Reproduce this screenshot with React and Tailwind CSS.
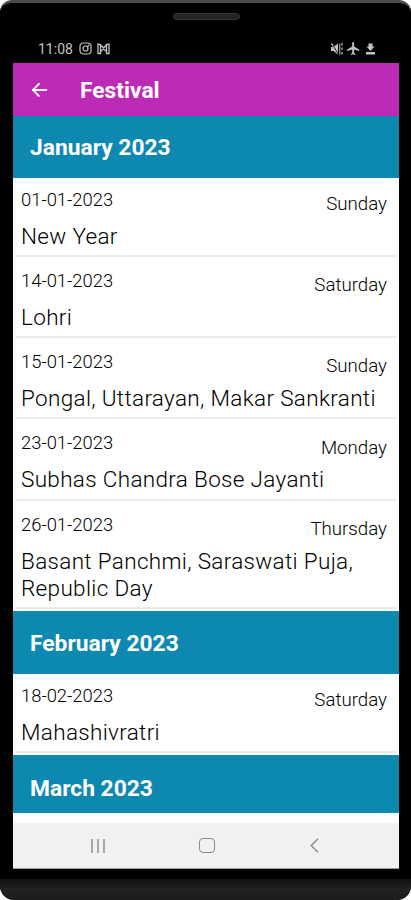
const months = [
  {
    title: 'January 2023',
    height: 'h-[61.5px]',
    festivals: [
      { date: '01-01-2023', day: 'Sunday', names: ['New Year'] },
      { date: '14-01-2023', day: 'Saturday', names: ['Lohri'] },
      { date: '15-01-2023', day: 'Sunday', names: ['Pongal, Uttarayan, Makar Sankranti'] },
      { date: '23-01-2023', day: 'Monday', names: ['Subhas Chandra Bose Jayanti'] },
      { date: '26-01-2023', day: 'Thursday', names: ['Basant Panchmi, Saraswati Puja,', 'Republic Day'] },
    ],
  },
  {
    title: 'February 2023',
    height: 'h-[63px] pt-[4px]',
    festivals: [{ date: '18-02-2023', day: 'Saturday', names: ['Mahashivratri'] }],
  },
  { title: 'March 2023', height: 'h-[63px] pt-[5px]', festivals: [] },
]

function StatusBar() {
  return (
    <div className="h-[33px] shrink-0 flex items-center justify-between pl-[25px] pr-[23px] pt-[4px] text-[#c4c4c4]">
      <div className="flex items-center">
        <span className="w-[35px] text-[14px] leading-none">11:08</span>
        <svg className="ml-[6px]" width="13" height="13" viewBox="0 0 13 13" fill="none" stroke="currentColor" strokeWidth="1.2">
          <rect x="1" y="1" width="11" height="11" rx="3.2" />
          <circle cx="6.5" cy="6.5" r="2.5" />
          <circle cx="9.5" cy="3.5" r=".4" />
        </svg>
        <svg className="ml-[5px]" width="13" height="12" viewBox="0 0 13 12" fill="none" stroke="currentColor" strokeWidth="1.3">
          <path d="M1 1v9.5h2.5V1.5ZM9.5 1.5v9H12V1ZM3.5 2 6.5 5l3-3M3.5 8.500l3-2.500 3 2.500" />
        </svg>
      </div>
      <div className="flex items-center gap-[4px]">
        <svg width="12" height="12" viewBox="0 0 12 12" fill="currentColor">
          <path d="M0 4h2.5L7 .5v11L2.500 8H0Z" />
          <path d="M.5.5l7 10.5" stroke="#000" strokeWidth=".9" />
          <path d="M0 0l2.5 3.5" stroke="currentColor" strokeWidth="1.2" />
          <path d="M8.8.5v11" stroke="currentColor" strokeWidth="1" />
          <path d="M11 0v2.5M11 4.5V7M11 9v2.5" stroke="currentColor" strokeWidth="1.2" />
        </svg>
        <svg width="13" height="13" viewBox="2 2 20 20" fill="currentColor">
          <path d="M21 16v-2l-8-5V3.500a1.500 1.500 0 0 0-3 0V9l-8 5v2l8-2.500V19l-2 1.500V22l3.500-1 3.500 1v-1.500L13 19v-5.500l8 2.500z" />
        </svg>
        <svg className="ml-[1px]" width="11" height="12" viewBox="0 0 11 12" fill="currentColor">
          <path d="M3.5.5h4v3h2L5.5 8l-4-4.500h2Z" />
          <path d="M1 9h9v2.5H1Z" />
        </svg>
      </div>
    </div>
  )
}

function FestivalRow({ festival }) {
  return (
    <div className="px-[2px] pb-[2px] shrink-0">
      <div className="flex flex-col border-x border-x-[#f2f2f2] border-b-2 border-b-[#ebebeb] pl-[5px] pr-[9px] pt-[11px] pb-[5.25px] font-light text-black">
        <div className="flex items-start justify-between leading-[22px]">
          <span className="text-[18.4px]">{festival.date}</span>
          <span className="pt-[4.25px] text-[18.7px]">{festival.day}</span>
        </div>
        <div className="mt-[7.75px] text-[22.5px] leading-[27px] tracking-[0.33px] whitespace-nowrap">
          {festival.names.map((name) => (
            <div key={name}>{name}</div>
          ))}
        </div>
      </div>
    </div>
  )
}

function NavBar() {
  return (
    <div className="h-[46px] shrink-0 flex items-center justify-between bg-[#f1f1f1] border-b border-[#999] pl-[78px] pr-[80px] text-[#8b8b8b]">
      <div className="flex gap-[4px]">
        <span className="w-[2px] h-[14px] bg-[#a8a8a8]" />
        <span className="w-[2px] h-[14px] bg-[#a8a8a8]" />
        <span className="w-[2px] h-[14px] bg-[#a8a8a8]" />
      </div>
      <span className="w-[16px] h-[15px] mr-[2px] rounded-[4px] border-[1.5px] border-[#8b8b8b]" />
      <svg width="9" height="15" viewBox="0 0 9 15" fill="none" stroke="currentColor" strokeWidth="1.4">
        <path d="M8 .8 1.2 7.5 8 14.2" />
      </svg>
    </div>
  )
}

export default function App() {
  return (
    <div className="w-[411px] h-[900px] bg-white overflow-hidden font-[Roboto,sans-serif]">
      <div className="h-[900px] flex flex-col bg-black rounded-t-[12px] rounded-b-[14px] border-t-[3px] border-t-[#4a4a4a] pl-[13px] pr-[12px] overflow-hidden">
        <div className="h-[27px] shrink-0 flex justify-center pt-[10px]">
          <div className="w-[67px] h-[7px] rounded-full bg-[#242424] border border-[#363636]" />
        </div>
        <StatusBar />
        <div className="h-[805px] shrink-0 flex flex-col bg-white">
          <header className="h-[53px] shrink-0 flex items-center bg-[#bd2ab5] text-white pl-[18px] pt-[2px]">
            <svg width="17" height="17" viewBox="0 0 18 18" fill="none" stroke="currentColor" strokeWidth="2">
              <path d="M17 8.5H3M9 1.5l-7 7 7 7" />
            </svg>
            <h1 className="ml-[32px] pt-[2px] text-[22.8px] leading-none font-bold">Festival</h1>
          </header>
          <main className="h-[707px] shrink-0 flex flex-col overflow-hidden">
            <div className="h-[697px] shrink-0 overflow-hidden">
              {months.map((month) => (
                <section key={month.title}>
                  <h2 className={`${month.height} flex items-center bg-[#0d88b0] pl-[17px] pt-[3px] text-[22.8px] leading-none font-bold text-white`}>
                    {month.title}
                  </h2>
                  {month.festivals.map((festival) => (
                    <FestivalRow key={festival.date} festival={festival} />
                  ))}
                </section>
              ))}
            </div>
          </main>
          <NavBar />
        </div>
        <div className="h-[11px] shrink-0" />
        <div className="h-[21px] shrink-0 -ml-[13px] -mr-[12px] bg-gradient-to-b from-[#111] via-[#222] to-[#1c1c1c] rounded-b-[14px]" />
      </div>
    </div>
  )
}
